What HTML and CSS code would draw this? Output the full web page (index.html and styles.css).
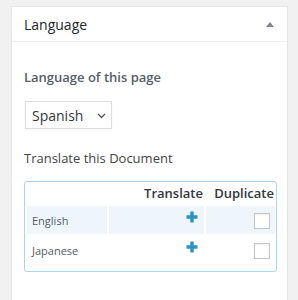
FILE: index.html
```html
<!DOCTYPE html>
<html>
<head>
<meta charset="utf-8">
<link rel="stylesheet" href="styles.css">
</head>
<body>
<div class="page">
  <div class="card">
    <div class="card-head">
      <h2 class="title">Language</h2>
      <svg class="toggle" width="8" height="5" viewBox="0 0 8 5"><path d="M4 0 L8 5 L0 5 Z" fill="#82878c"/></svg>
    </div>
    <div class="card-body">
      <p class="label">Language of this page</p>
      <div class="select-wrap">
        <select class="select"><option>Spanish</option></select>
        <svg class="chev" width="9" height="6" viewBox="0 0 9 6"><path d="M1 1 L4.5 4.5 L8 1" fill="none" stroke="#555" stroke-width="1.3"/></svg>
      </div>
      <p class="sub">Translate this Document</p>
      <div class="tbox">
        <table class="tr-table">
          <thead>
            <tr><th class="c1"></th><th class="c2">Translate</th><th class="c3">Duplicate</th></tr>
          </thead>
          <tbody>
            <tr class="alt">
              <td class="c1">English</td>
              <td class="c2"><svg class="plus" width="12" height="12" viewBox="0 0 12 12"><path d="M4.3 0.5 H7.7 V4.3 H11.5 V7.7 H7.7 V11.5 H4.3 V7.7 H0.5 V4.3 H4.3 Z" fill="#2a93c6"/></svg></td>
              <td class="c3"><span class="cb"></span></td>
            </tr>
            <tr>
              <td class="c1">Japanese</td>
              <td class="c2"><svg class="plus" width="12" height="12" viewBox="0 0 12 12"><path d="M4.3 0.5 H7.7 V4.3 H11.5 V7.7 H7.7 V11.5 H4.3 V7.7 H0.5 V4.3 H4.3 Z" fill="#2a93c6"/></svg></td>
              <td class="c3"><span class="cb"></span></td>
            </tr>
          </tbody>
        </table>
      </div>
    </div>
  </div>
</div>
</body>
</html>
```

FILE: styles.css
```css
html, body {
  margin: 0;
  padding: 0;
  background: #f1f1f1;
  font-family: "Open Sans", "Liberation Sans", sans-serif;
}
.page {
  padding: 6px 10px 0 11px;
}
.card {
  background: #fff;
  border: 1px solid #e5e5e5;
  border-bottom: none;
  height: 300px;
  box-shadow: 0 1px 1px rgba(0,0,0,0.04);
}
.card-head {
  height: 34px;
  display: flex;
  align-items: center;
  justify-content: space-between;
  padding: 0 13px 0 12px;
  border-bottom: 1px solid #eee;
}
.title {
  margin: 0;
  font-size: 14px;
  font-weight: 400;
  line-height: 19px;
  color: #23282d;
}
.toggle {
  display: block;
  margin-top: 1px;
}
.card-body {
  padding: 26px 11px 0 12px;
}
.label {
  margin: 0;
  font-size: 13px;
  font-weight: 600;
  line-height: 18px;
  color: #555d66;
}
.select-wrap {
  position: relative;
  display: inline-block;
  margin: 15px 0 0 1px;
}
.select {
  appearance: none;
  -webkit-appearance: none;
  display: block;
  width: 87px;
  height: 28px;
  border: 1px solid #ddd;
  border-radius: 0;
  background: #fff;
  font-family: "Open Sans", "Liberation Sans", sans-serif;
  font-size: 14px;
  color: #32373c;
  padding: 0 0 0 6px;
  margin: 0;
  box-shadow: 0 1px 2px rgba(0,0,0,0.04);
}
.chev {
  position: absolute;
  left: 72px;
  top: 12px;
  pointer-events: none;
}
.sub {
  margin: 20px 0 0;
  font-size: 13px;
  font-weight: 400;
  line-height: 18px;
  color: #444;
}
.tbox {
  margin-top: 14px;
  width: 251px;
  border: 1px solid #a9d6ee;
  border-radius: 3px;
  padding-bottom: 5px;
}
.tr-table {
  width: 100%;
  border-collapse: separate;
  border-spacing: 2px;
  table-layout: fixed;
}
.tr-table th {
  height: 20px;
  padding: 0 1px 0 0;
  text-align: right;
  vertical-align: top;
  font-size: 13px;
  font-weight: 600;
  line-height: 18px;
  color: #32373c;
  white-space: nowrap;
}
.tr-table td {
  height: 28px;
  padding: 0 5px;
  vertical-align: middle;
  font-size: 11px;
  color: #555d66;
}
.tr-table .c1 { width: 79px; text-align: left; }
.tr-table .c2 { width: 94px; }
.tr-table .c3 { width: 68px; }
.tr-table td.c2 { text-align: right; padding-right: 6px; }
.tr-table td.c3 { text-align: right; padding-right: 5px; }
.tr-table tr.alt td { background: #eef6fc; }
.plus {
  display: inline-block;
  vertical-align: middle;
  margin-bottom: 6px;
}
.cb {
  display: inline-block;
  vertical-align: middle;
  width: 14px;
  height: 14px;
  border: 1px solid #c3c6c9;
  background: #fff;
  box-shadow: inset 0 1px 2px rgba(0,0,0,0.07);
}
```
